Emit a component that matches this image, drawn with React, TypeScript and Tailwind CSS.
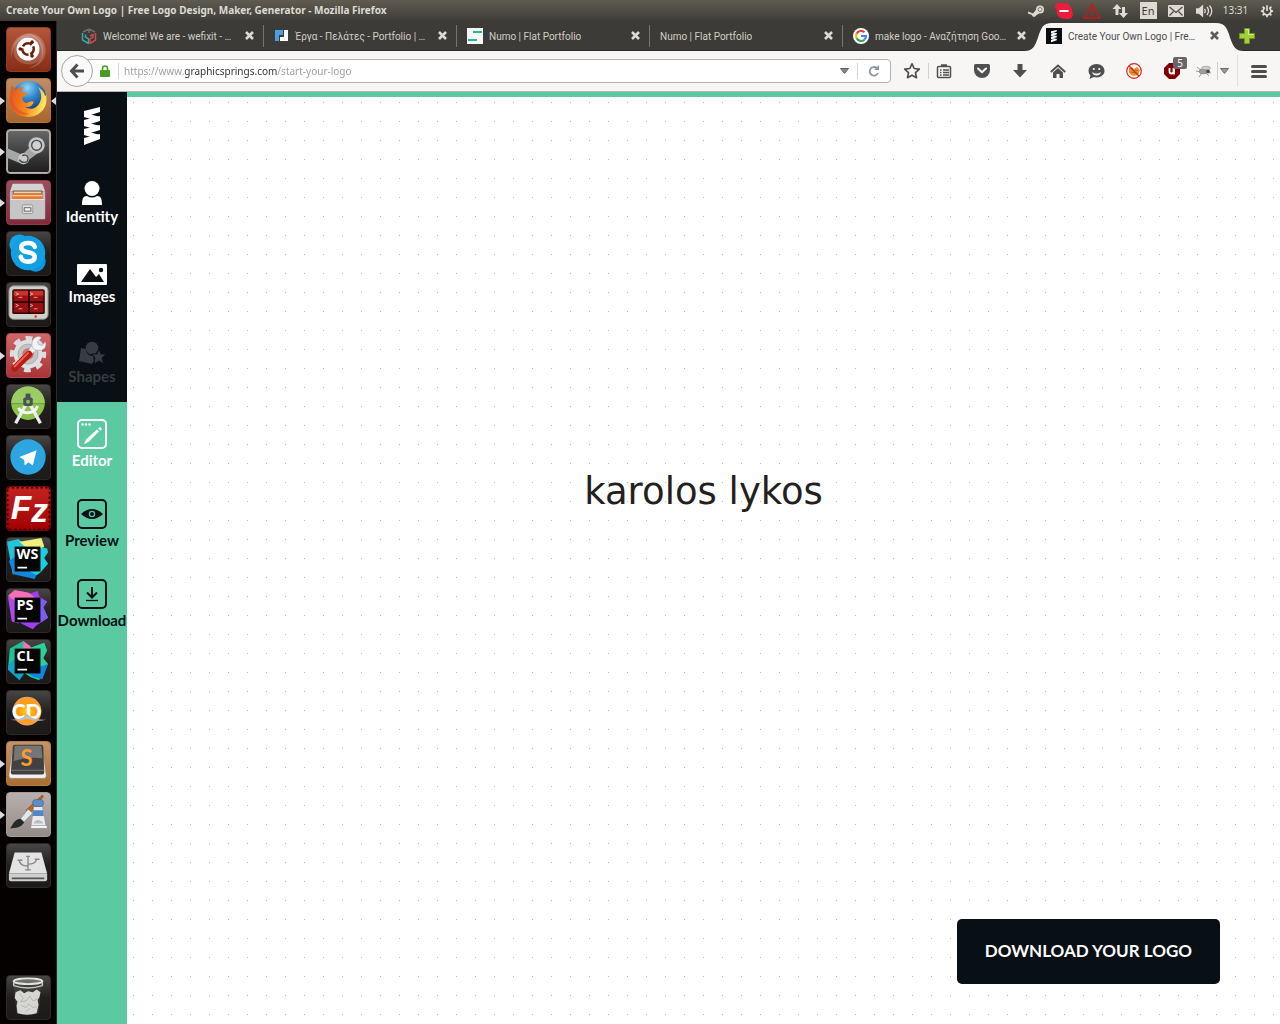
import React from "react";
import type { ReactNode } from "react";

/* ---------- launcher artwork, all on a 45x45 grid ---------- */

const UbuntuArt = () => (
  <svg viewBox="0 0 45 45" className="size-full" aria-hidden="true">
    <path d="M5 31C2 14 14 4 27 6c10 2 15 12 13 22-2 7-8 13-17 14 10-4 15-11 13-20C34 11 25 7 17 11 9 14 5 22 5 31z" fill="#fff" opacity=".22" />
    <path d="M22 6c9 0 16 8 16 17S31 39 21 38 6 31 7 22 14 7 22 6z" fill="#fff" opacity=".18" />
    <circle cx="22" cy="22" r="12" fill="#fff" />
    <circle cx="22" cy="22" r="6" fill="none" stroke="#6b1f0c" strokeWidth="2.6" strokeDasharray="10.6 2" strokeDashoffset="4" />
    <circle cx="13.8" cy="22" r="1.9" fill="#5c1a0a" />
    <circle cx="26.2" cy="14.8" r="1.9" fill="#5c1a0a" />
    <circle cx="26.2" cy="29.2" r="1.9" fill="#5c1a0a" />
  </svg>
);

const FirefoxArt = () => (
  <svg viewBox="0 0 45 45" className="size-full" aria-hidden="true">
    <defs>
      <radialGradient id="ffGlobe" cx=".45" cy=".2" r=".8">
        <stop offset="0" stopColor="#8fd6f5" />
        <stop offset=".4" stopColor="#2f86cc" />
        <stop offset="1" stopColor="#08205c" />
      </radialGradient>
      <linearGradient id="ffTail" x1="0" y1="0" x2="1" y2=".2">
        <stop offset="0" stopColor="#e4511c" />
        <stop offset=".55" stopColor="#f5871f" />
        <stop offset="1" stopColor="#ffe45c" />
      </linearGradient>
    </defs>
    <circle cx="23" cy="20" r="18" fill="url(#ffGlobe)" />
    <path d="M5 7c2 1 3 3 4 5 3-3 5-4 9-3-2 1-3 3-3 5 3 0 5 0 6 1 0 2-3 3-5 4 0 3 1 5 4 6 3 0 5-3 8-1-1 4-5 6-9 5 5 4 12 2 15-4 3-5 2-12-2-17 5 3 7 6 8 10l1-2c1 7 0 13-4 17-5 6-13 8-20 6C8 37 2 29 3 19c0-4 1-8 2-12z" fill="url(#ffTail)" />
    <path d="M5 17c0 10 7 18 18 19-9 5-20-4-20-14z" fill="#e5521d" opacity=".65" />
  </svg>
);

const SteamArt = () => (
  <svg viewBox="0 0 45 45" className="size-full" aria-hidden="true">
    <rect x="0" y="0" width="45" height="45" rx="4" fill="none" stroke="#b9b7b0" strokeWidth="2" />
    <path d="M0 19l16 7 10-10 8 7-12 9-5 4L0 29z" fill="#a4a6a8" />
    <circle cx="31" cy="16" r="8.500" fill="#c3c5c7" />
    <circle cx="31" cy="16" r="5.200" fill="#cfd1d2" stroke="#4a4a4a" strokeWidth="1.400" />
    <circle cx="17.500" cy="30" r="5.800" fill="#c9cbcc" />
    <path d="M13 31c2 4 9 4 9-1s-5-4-6-3" fill="none" stroke="#4a4a4a" strokeWidth="1.400" />
  </svg>
);

const FilesArt = () => (
  <svg viewBox="0 0 45 45" className="size-full" aria-hidden="true">
    <path d="M6 3h31l3 8H3z" fill="#d3d3d3" />
    <path d="M3 11h37v28q0 1-1 1H4q-1 0-1-1z" fill="#bfc0c0" />
    <rect x="6" y="10" width="31" height="9" fill="#6a4a3a" />
    <path d="M7 11h29v2H7z" fill="#f1d2a8" />
    <path d="M6 13h31v6H6z" fill="#e8792e" />
    <path d="M6 15h31v1H6z" fill="#fbe3cd" />
    <rect x="4" y="19" width="35" height="20" rx="1" fill="#c6c6c6" />
    <path d="M4 19h35v1H4z" fill="#eee" />
    <rect x="16" y="25" width="11" height="9" rx="1.500" fill="#e4e4e4" stroke="#858585" strokeWidth=".8" />
    <rect x="18" y="28" width="7" height="3.500" fill="#fafafa" stroke="#5a5a5a" />
  </svg>
);

const SkypeArt = () => (
  <svg viewBox="0 0 45 45" className="size-full" aria-hidden="true">
    <circle cx="13" cy="13" r="10.500" fill="#14a5e6" />
    <circle cx="30" cy="31" r="10.500" fill="#0c94dc" />
    <circle cx="22" cy="22" r="18" fill="#12a0e4" />
    <path d="M29 15.500c-1-3-4-4-7-4-4 0-7 1.500-7 4.800 0 6.700 14 3.200 14 9.700 0 3.500-3 5-7 5s-7-2-7.500-5" fill="none" stroke="#fff" strokeWidth="4.800" strokeLinecap="round" />
  </svg>
);

const TerminatorArt = () => (
  <svg viewBox="0 0 45 45" className="size-full" aria-hidden="true">
    <rect x="2" y="3" width="41" height="35" rx="5" fill="#d0d1ca" stroke="#8a8b85" />
    <rect x="5.500" y="6.500" width="34" height="26" rx="2" fill="#2c0505" />
    <path d="M7 8h15v11H7zM24 8h14v11H24zM7 21h15v10H7zM24 21h14v10H24z" fill="#98100f" />
    <path d="M7 8h15v5H7zM24 8h14v5H24z" fill="#c8322c" />
    <path d="M9 10l3 1.500L9 13M24 10l3 1.500-3 1.500M9 22l3 1.500L9 25M24 22l3 1.500-3 1.500M12 15h4M28 15h4M12 27h4M28 27h4" fill="none" stroke="#f1c9c5" strokeWidth=".8" />
    <circle cx="30" cy="35" r="1.300" fill="#e33" />
  </svg>
);

const SettingsArt = () => (
  <svg viewBox="0 0 45 45" className="size-full" aria-hidden="true">
    <circle cx="22" cy="21" r="16.500" fill="none" stroke="#dcddde" strokeWidth="5" strokeDasharray="7 5.960" strokeDashoffset="3" />
    <circle cx="22" cy="21" r="15" fill="#dfe0e1" />
    <circle cx="22" cy="21" r="10.500" fill="#c2c4c6" stroke="#abadaf" strokeWidth="1" />
    <circle cx="22" cy="21" r="6" fill="#cf7072" />
    <path d="M20 23L32 11" stroke="#f2f3f4" strokeWidth="5" />
    <path d="M28 5c3-3 6-3 8-1l-4 4 1 3 4 1 3-4c2 4-1 9-5 9-6 1-9-2-9-6 0-3 1-5 2-6z" fill="#f2f3f4" stroke="#a5a7a9" strokeWidth=".7" />
    <path d="M8 36l15-15" stroke="#b51c13" strokeWidth="7" strokeLinecap="round" />
    <path d="M8 34l14-14" stroke="#ec6355" strokeWidth="2" strokeLinecap="round" />
  </svg>
);

const AndroidStudioArt = () => (
  <svg viewBox="0 0 45 45" className="size-full" aria-hidden="true">
    <circle cx="22" cy="19" r="17.500" fill="#8bc34a" />
    <path d="M4.500 19a17.500 17.500 0 0 1 35 0z" fill="#9ccc65" />
    <path d="M4.500 19.500h35" stroke="#5d8b2d" strokeWidth=".7" />
    <path d="M20 20L9 40M24 20l11 20" stroke="#ececec" strokeWidth="3.500" />
    <path d="M12 24c3 7 17 7 20-2" fill="none" stroke="#f5f5f5" strokeWidth="3" />
    <rect x="17" y="13" width="10" height="9" rx="2" fill="#4b5257" />
    <rect x="19.500" y="9" width="5" height="5" fill="#4b5257" />
    <circle cx="22" cy="17.500" r="2" fill="#8bc34a" />
  </svg>
);

const TelegramArt = () => (
  <svg viewBox="0 0 45 45" className="size-full" aria-hidden="true">
    <circle cx="22" cy="22" r="18.500" fill="#2ca5e0" />
    <path d="M31 15L13 22l5 3 .5 6 4-3.500L27 31z" fill="#fff" />
  </svg>
);

const FileZillaArt = () => (
  <svg viewBox="0 0 45 45" className="size-full" aria-hidden="true">
    <rect x="0" y="0" width="45" height="45" fill="none" stroke="#3d0000" strokeWidth="3" strokeDasharray="2.500 2.500" />
    <text x="4" y="34" fill="#fff" fontFamily="Liberation Sans" fontWeight="700" fontStyle="italic" fontSize="35">
      F<tspan dy="3">z</tspan>
    </text>
  </svg>
);

const JetBrainsArt = ({ letters, patches }: { letters: string; patches: [string, string][] }) => (
  <svg viewBox="0 0 45 45" className="size-full" aria-hidden="true">
    {patches.map(([d, fill]) => (
      <path key={d} d={d} fill={fill} />
    ))}
    <rect x="8" y="9" width="27" height="26" fill="#050505" />
    <text x="10" y="22" fill="#fff" fontFamily="Open Sans" fontWeight="700" fontSize="15">{letters}</text>
    <path d="M11 31h10" stroke="#fff" strokeWidth="1.800" />
  </svg>
);

const CdArt = () => (
  <svg viewBox="0 0 45 45" className="size-full" aria-hidden="true">
    <defs>
      <radialGradient id="cdSun">
        <stop offset="0" stopColor="#ffd21c" />
        <stop offset=".6" stopColor="#ff9c10" />
        <stop offset="1" stopColor="#f7a04c" />
      </radialGradient>
    </defs>
    <circle cx="21" cy="21" r="15" fill="url(#cdSun)" />
    <text x="5" y="29" fill="#fff" fontFamily="Lato" fontWeight="900" fontSize="22">CD</text>
    <path d="M3 30c8 0 13-1 18-6 5 5 10 6 20 6-8 2-14 1-20-1-6 2-11 2-18 1z" fill="#b8bec5" />
  </svg>
);

const SublimeArt = () => (
  <svg viewBox="0 0 45 45" className="size-full" aria-hidden="true">
    <path d="M6 6h31l4 29q0 3-3 3H5q-3 0-3-3z" fill="#f2f2f0" stroke="#8d8780" strokeWidth=".5" />
    <path d="M8 3h28q2 0 2 2l1 27q0 2-2 2H6q-2 0-2-2L6 5q0-2 2-2z" fill="#414141" />
    <path d="M8 4h28l1 13Q22 15 7 20z" fill="#757575" />
    <path d="M4 29h35v1H4z" fill="#777" />
    <text x="14" y="25" fill="#ff9a2d" fontFamily="Lato" fontWeight="700" fontSize="23">S</text>
  </svg>
);

const PaintArt = () => (
  <svg viewBox="0 0 45 45" className="size-full" aria-hidden="true">
    <path d="M35 4l2-2 1 2-13 17-5-3z" fill="#c0641c" stroke="#7b3b0c" strokeWidth=".6" />
    <path d="M22 17l5 4-9 9-4-3z" fill="#e4e6e8" stroke="#777" strokeWidth=".6" />
    <path d="M14 27l4 4c-3 5-9 6-15 6 3-2 3-9 11-10z" fill="#26282a" />
    <path d="M28 14h9l4 21H25z" fill="#e7eaec" stroke="#8d9295" strokeWidth=".7" />
    <path d="M27.500 18h10l1 6H26.500z" fill="#4f87c4" />
    <rect x="27" y="7" width="11" height="7" rx="2.500" fill="#5f8fc6" stroke="#3b628f" strokeWidth=".7" />
    <path d="M28 32c1-5 8-5 10 0" fill="#b9bcbe" />
    <rect x="25" y="34" width="17" height="3" fill="#f4f4f4" stroke="#8a8a8a" strokeWidth=".6" />
  </svg>
);

const DriveArt = () => (
  <svg viewBox="0 0 45 45" className="size-full" aria-hidden="true">
    <path d="M8 9h28l6 22H2z" fill="#e3e3e3" />
    <path d="M2 31h40v6q0 2-2 2H4q-2 0-2-2z" fill="#cfcfcf" />
    <path d="M5 35h34v2H5z" fill="#555" />
    <path d="M22 13v14M22 23c-5 0-9-1-9-6M22 21c5 0 8-1 9-5M19 27h6M20 13h4M11 17h5M29 16h5" fill="none" stroke="#888" strokeWidth="1.400" />
  </svg>
);

const TrashArt = () => (
  <svg viewBox="0 0 45 45" className="size-full" aria-hidden="true">
    <path d="M7 8l3 31q11 4 23 0l3-31z" fill="#4a4a48" opacity=".55" />
    <path d="M9 17l5-2 4 3 4-2 5 1 4-3 4 3-1 5-2 3 1 5-2 9q-10 3-20 0l-1-8 1-4-3-4z" fill="#d6d6d2" />
    <path d="M13 19l4 4-3 4 6-1 4-5 3 5 5-2M15 31l5 2 3-4 4 4 4-1M20 37l4-3" fill="none" stroke="#b3b2ad" />
    <ellipse cx="22" cy="5.500" rx="15" ry="3" fill="#6f6f6b" stroke="#e4e4e0" strokeWidth="2" />
    <path d="M7 7v3q15 5 30 0V7" fill="none" stroke="#c5c5c0" strokeWidth="1.500" />
  </svg>
);

type LauncherItem = { name: string; art: ReactNode; tile: string; open?: boolean; focused?: boolean };

const darkTile = "bg-linear-to-b from-[#4a4847] via-[#22201f] to-[#1c1a19] border-[#2c2a29]";

const launcherItems: LauncherItem[] = [
  { name: "Search your computer", art: <UbuntuArt />, tile: "bg-linear-to-b from-[#b5583c] to-[#852c12] border-[#8d3b22]" },
  { name: "Firefox", art: <FirefoxArt />, tile: "bg-linear-to-b from-[#c08e68] to-[#a8652c] border-[#b17442]", open: true, focused: true },
  { name: "Steam", art: <SteamArt />, tile: "bg-linear-to-b from-[#6b6b6b] to-[#1b1b1b] border-[#a5a39d]", open: true },
  { name: "Files", art: <FilesArt />, tile: "bg-linear-to-b from-[#9c5060] to-[#802a3c] border-[#8b3c4b]", open: true },
  { name: "Skype", art: <SkypeArt />, tile: darkTile },
  { name: "Terminator", art: <TerminatorArt />, tile: darkTile },
  { name: "System Settings", art: <SettingsArt />, tile: "bg-linear-to-b from-[#d0686a] to-[#a83236] border-[#b54549]", open: true },
  { name: "Android Studio", art: <AndroidStudioArt />, tile: darkTile },
  { name: "Telegram", art: <TelegramArt />, tile: darkTile },
  { name: "FileZilla", art: <FileZillaArt />, tile: "bg-linear-to-b from-[#c52222] to-[#9f0000] border-[#7a0505]" },
  {
    name: "WebStorm",
    art: (
      <JetBrainsArt
        letters="WS"
        patches={[
          ["M0 4l12-3 7 6-6 30-7 1z", "#22c3dc"],
          ["M2 24l6-4 20 14 4 1-3 8-22-5z", "#1287e0"],
          ["M34 5l4 5 4 1 1 4-4 6 4 6-8 9-4 3-7-4 8-20z", "#19cfe0"],
          ["M13 4l23-4 3 9-14 6z", "#f0ee7c"],
        ]}
      />
    ),
    tile: darkTile,
  },
  {
    name: "PhpStorm",
    art: (
      <JetBrainsArt
        letters="PS"
        patches={[
          ["M1 8l8 0 8 20-5 8-7-2z", "#b347f0"],
          ["M20 6l12-4 2 6 8 5-4 6 5 11-12 8-4 4-14-7 4-6z", "#a23df2"],
          ["M34 10l8 3-4 6 5 11-9 6z", "#7b5cf5"],
          ["M1 7l7-6 15 3 6 5-20 4z", "#f56fb8"],
        ]}
      />
    ),
    tile: darkTile,
  },
  {
    name: "CLion",
    art: (
      <JetBrainsArt
        letters="CL"
        patches={[
          ["M3 9l14-8 2 10-6 26-4 1-8-7z", "#1fc296"],
          ["M2 26l6-6 10 15-5 7-12-11z", "#11a3c8"],
          ["M22 9l17-6 3 8-4 8 5 6-8 11-1 6-9-3-6-4z", "#27d39a"],
          ["M34 28l9-3-6 16-9-2-6-4z", "#0f86dd"],
          ["M17 1l7 5 2 4-9 2z", "#ec77b4"],
        ]}
      />
    ),
    tile: darkTile,
  },
  { name: "CD", art: <CdArt />, tile: darkTile },
  { name: "Sublime Text", art: <SublimeArt />, tile: "bg-linear-to-b from-[#c49468] to-[#a86d30] border-[#b27c46]", open: true },
  { name: "MyPaint", art: <PaintArt />, tile: "bg-linear-to-b from-[#b9b1ad] to-[#948b87] border-[#a49c98]", open: true },
  { name: "USB drive", art: <DriveArt />, tile: darkTile },
];

function LauncherButton({ item }: { item: LauncherItem }) {
  return (
    <li className="relative flex justify-center">
      {item.open && <span className="absolute top-1/2 left-0 size-0 -translate-y-1/2 border-y-4 border-l-[5px] border-y-transparent border-l-[#dcdcdc]" />}
      <button type="button" aria-label={item.name} className={`size-[45px] overflow-hidden rounded border bg-origin-border ${item.tile}`}>
        {item.art}
      </button>
      {item.focused && <span className="absolute top-1/2 right-0 size-0 -translate-y-1/2 border-y-4 border-r-[5px] border-y-transparent border-r-[#dcdcdc]" />}
    </li>
  );
}

function Launcher() {
  return (
    <nav aria-label="Launcher" className="flex w-[57px] shrink-0 flex-col border-r border-[#2b2a28] bg-[#060101] pt-1.5 pb-1">
      <ul className="flex flex-col gap-1.5">
        {launcherItems.map((item) => (
          <LauncherButton key={item.name} item={item} />
        ))}
      </ul>
      <ul className="mt-auto">
        <LauncherButton item={{ name: "Trash", art: <TrashArt />, tile: darkTile }} />
      </ul>
    </nav>
  );
}

/* ---------- desktop top bar ---------- */

const trayItems: { name: string; icon: ReactNode }[] = [
  {
    name: "Steam",
    icon: (
      <svg viewBox="0 0 18 16" className="h-4 w-[18px]">
        <path d="M1 8.500l5 2 4-5 4 3.500-5 3.500c-1 2-4 1.500-4-.5L1 10.500z" fill="#dfdbd2" />
        <circle cx="13" cy="6.500" r="4" fill="#dfdbd2" />
        <circle cx="13" cy="6.500" r="2" fill="none" stroke="#6a675e" strokeWidth=".8" />
      </svg>
    ),
  },
  {
    name: "Skype",
    icon: (
      <svg viewBox="0 0 18 18" className="size-[18px]">
        <path d="M0 4c1-3 4-4 6-3 7-1 11 3 11 8 2 4 0 8-3 8-2 0-3 0-5-.5-5 0-8-4-7-8.500-2-1-2-3-2-4z" fill="#ee1c3c" />
        <path d="M4.500 9h9" stroke="#fff" strokeWidth="2" />
      </svg>
    ),
  },
  {
    name: "Warning",
    icon: (
      <svg viewBox="0 0 18 16" className="h-4 w-[18px]" fill="none" stroke="#cf1419" strokeWidth="1.300">
        <path d="M9 1L1 15h16z" />
        <path d="M9 5v5M9 11.500v2" strokeWidth="1.800" />
      </svg>
    ),
  },
  {
    name: "Network",
    icon: (
      <svg viewBox="0 0 16 16" className="size-4" fill="#dfdbd2">
        <path d="M5 1L.5 6h3v6h3V6h3zM11.500 15l4.500-5h-3V4h-3v6H7z" />
      </svg>
    ),
  },
  { name: "Keyboard layout", icon: <span className="flex h-[17px] w-[17px] items-center justify-center bg-[#dfdbd2] text-[11px] leading-none text-[#3c3b37]">En</span> },
  {
    name: "Messages",
    icon: (
      <svg viewBox="0 0 16 12" className="h-3 w-4">
        <rect width="16" height="12" rx="1" fill="#dfdbd2" />
        <path d="M1.500 2L8 7.500 14.500 2M1.500 10.500l4-4M14.500 10.500l-4-4" fill="none" stroke="#4c4a44" strokeWidth="1.200" />
      </svg>
    ),
  },
  {
    name: "Volume",
    icon: (
      <svg viewBox="0 0 17 14" className="h-3.5 w-[17px]" fill="none" stroke="#dfdbd2" strokeWidth="1.300">
        <path d="M.5 5H3l3.500-3v10L3 9H.5z" fill="#dfdbd2" />
        <path d="M8.500 5q1.500 2 0 4M11 3q3 4 0 8M13.500 1.500q4.500 5.500 0 11" />
      </svg>
    ),
  },
];

function TopBar() {
  return (
    <header className="flex h-[21px] shrink-0 items-center bg-linear-to-b from-[#5f5b50] to-[#3e3d39] text-[#dfdbd2]">
      <h1 className="min-w-0 flex-1 truncate pl-1.5 text-[10px] leading-[21px] font-bold">
        Create Your Own Logo | Free Logo Design, Maker, Generator - Mozilla Firefox
      </h1>
      {trayItems.map((item) => (
        <button key={item.name} type="button" aria-label={item.name} className="flex h-full w-7 items-center justify-center">
          {item.icon}
        </button>
      ))}
      <time className="w-[35px] text-center text-[10px]">13:31</time>
      <button type="button" aria-label="Session" className="flex w-[27px] justify-center">
        <svg viewBox="0 0 16 16" className="size-3.5" fill="none" stroke="#dfdbd2">
          <path d="M5.500 4.300a4.500 4.500 0 1 0 5 0M8 1.500V8" strokeWidth="1.900" />
          <path d="M1 8h2.500M12.500 8H15M3 3l1.600 1.600M13 3l-1.600 1.600M3 13l1.600-1.600M13 13l-1.600-1.600M8 12.500V15" strokeWidth="2" />
        </svg>
      </button>
    </header>
  );
}

/* ---------- browser tabs ---------- */

const SpringShape = () => (
  <g fill="#fff">
    <path d="M0 4L16 0v5L0 10zM0 13l16-4v5L0 19zM0 22l16-4v5L0 28zM0 31l16-4v5L0 38z" />
    <path d="M0 8l5-1 11 3-6 3-10-3zM0 17l5-1 11 3-6 3-10-3zM0 26l5-1 11 3-6 3-10-3z" />
  </g>
);

const WefixitIcon = () => (
  <svg viewBox="0 0 16 16" className="size-4 shrink-0" fill="none" strokeWidth="1.500">
    <path d="M2 4l6-3 6 3M8 1v4" stroke="#6d6d6d" />
    <path d="M1.500 5v7l6 3.500V11l-3-2V6.500" stroke="#38a9a6" />
    <path d="M14.500 5v7L9 15.500V11l3-2V6.500L9 8" stroke="#c94b4f" />
  </svg>
);

const PortfolioIcon = () => (
  <svg viewBox="0 0 14 12" className="ml-px h-3 w-3.5 shrink-0">
    <path d="M0 0h8v5H4v6H0z" fill="#4aa0dc" />
    <path d="M9 0h4v11H5V7h4z" fill="#fff" />
  </svg>
);

const NumoIcon = () => (
  <svg viewBox="0 0 16 16" className="size-4 shrink-0">
    <path d="M0 0h16v16H0z" fill="#f6f6f6" />
    <path d="M6 4h9M1 12h9" stroke="#1fb89b" strokeWidth="1.800" />
  </svg>
);

const GoogleIcon = () => (
  <svg viewBox="0 0 16 16" className="size-4 shrink-0">
    <circle cx="8" cy="8" r="8" fill="#fff" />
    <g fill="none" strokeWidth="2.200">
      <path d="M11.500 4.300A5 5 0 0 0 3.600 5.700" stroke="#ea4335" />
      <path d="M3.600 5.700a5 5 0 0 0 0 4.600" stroke="#fbbc05" />
      <path d="M3.600 10.300a5 5 0 0 0 7.800 1.400" stroke="#34a853" />
      <path d="M11.400 11.700A5 5 0 0 0 13 8H8" stroke="#4285f4" />
    </g>
  </svg>
);

const SpringIcon = () => (
  <svg viewBox="0 0 16 16" className="size-4 shrink-0">
    <path d="M0 0h16v16H0z" fill="#070f14" />
    <g transform="translate(5 2) scale(.36 .32)">
      <SpringShape />
    </g>
  </svg>
);

const tabs: { title: string; icon?: ReactNode; active?: boolean }[] = [
  { title: "Welcome! We are - wefixit - …", icon: <WefixitIcon /> },
  { title: "Έργα - Πελάτες - Portfolio | …", icon: <PortfolioIcon /> },
  { title: "Numo | Flat Portfolio", icon: <NumoIcon /> },
  { title: "Numo | Flat Portfolio" },
  { title: "make logo - Αναζήτηση Goo…", icon: <GoogleIcon /> },
  { title: "Create Your Own Logo | Fre…", icon: <SpringIcon />, active: true },
];

function TabStrip() {
  return (
    <div className="flex h-[30px] shrink-0 border-b border-[#2a2926] bg-[#3c3b37] pl-[14px] font-[Roboto,sans-serif]">
      <div role="tablist" aria-label="Browser tabs" className="flex min-w-0">
        {tabs.map((tab, i) => (
          <div key={i} className="relative flex w-[193px] min-w-0 items-center">
            {tab.active && (
              <svg viewBox="0 0 220 29" preserveAspectRatio="none" className="absolute -left-3 top-0.5 h-7 w-[220px]" aria-hidden="true">
                <path d="M0 29c9 0 11-5 14-14C17 5 19 0 28 0h164c9 0 11 5 14 15 3 9 5 14 14 14z" fill="#f7f6f5" />
              </svg>
            )}
            <button type="button" role="tab" aria-selected={!!tab.active} className={`relative flex min-w-0 flex-1 items-center gap-1.5 pl-2.5 text-left text-[10px] leading-4 ${tab.active ? "text-[#4c4c4c]" : "text-[#d3cfc5]"}`}>
              {tab.icon}
              <span className="overflow-hidden pt-0.5 whitespace-nowrap">{tab.title}</span>
            </button>
            <button type="button" aria-label={`Close ${tab.title}`} className={`relative mr-2 flex w-3 shrink-0 justify-center ${tab.active ? "text-[#5c5c5c]" : "text-[#dcdad5]"}`}>
              <svg viewBox="0 0 9 9" className="size-[9px]" stroke="currentColor" strokeWidth="2.600">
                <path d="M1 1l7 7M8 1L1 8" />
              </svg>
            </button>
            <span className={`h-[22px] w-px ${i < 4 ? "bg-[#75736e]" : "bg-transparent"}`} />
          </div>
        ))}
      </div>
      <button type="button" aria-label="Open a new tab" className="relative ml-2.5 flex items-center">
        <svg viewBox="0 0 16 16" className="size-4">
          <path d="M5.500.5h5v5h5v5h-5v5h-5v-5h-5v-5h5z" fill="#a4cf3b" stroke="#6f9c1c" />
          <path d="M6.500 1.500h3v5h5" fill="none" stroke="#d3ec8c" />
        </svg>
      </button>
    </div>
  );
}

/* ---------- browser toolbar ---------- */

const toolButton = "flex h-full w-[38px] shrink-0 items-center justify-center text-[#4f4f4f]";

function Toolbar() {
  return (
    <div className="flex h-[41px] shrink-0 items-center border-b border-[#b6b6b3] bg-[#f7f6f5] pl-1">
      <button type="button" aria-label="Back" className="relative z-10 flex size-8 shrink-0 items-center justify-center rounded-full border border-[#a9a8a4] bg-[#fafafa]">
        <svg viewBox="0 0 16 16" className="size-4" fill="none" stroke="#4d4d4d" strokeWidth="3">
          <path d="M8.500 1.500L2.500 8l6 6.500M3 8h12" />
        </svg>
      </button>
      <div className="-ml-2 flex h-6 min-w-0 flex-1 items-center rounded-r-sm border border-[#b1b0ac] bg-white pl-3.5">
        <svg viewBox="0 0 10 12" className="h-3 w-2.5 shrink-0">
          <path d="M2.500 6V3.500a2.500 2.500 0 0 1 5 0V6" fill="none" stroke="#4a9a23" strokeWidth="1.600" />
          <rect y="5" width="10" height="7" rx="1" fill="#4a9a23" />
        </svg>
        <span className="ml-2 h-4 w-px shrink-0 bg-[#d4d4d4]" />
        <input
          type="text"
          aria-label="Address"
          defaultValue="https://www.graphicsprings.com/start-your-logo"
          className="ml-[5px] h-full min-w-0 flex-1 bg-[linear-gradient(90deg,#9a9a9a_60px,#2e2e2e_60px,#2e2e2e_153px,#9a9a9a_153px)] bg-clip-text text-[10px] text-transparent outline-none"
        />
        <button type="button" aria-label="Show history" className="flex w-[25px] justify-center">
          <svg viewBox="0 0 9 6" className="h-1.5 w-[9px]">
            <path d="M.5.5h8l-4 5z" fill="#888" stroke="#5e5e5e" />
          </svg>
        </button>
        <span className="h-4 w-px bg-[#d4d4d4]" />
        <button type="button" aria-label="Reload" className="flex w-8 justify-center">
          <svg viewBox="0 0 12 12" className="size-3" fill="none" stroke="#8a98a5" strokeWidth="1.800">
            <path d="M9 3.200A4.300 4.300 0 1 0 10 8" />
            <path d="M11 0v5H6z" fill="#8a98a5" stroke="none" />
          </svg>
        </button>
      </div>
      <button type="button" aria-label="Bookmark this page" className="ml-1 flex h-full w-[33px] shrink-0 items-center justify-center">
        <svg viewBox="0 0 18 18" className="size-[18px]" fill="none" stroke="#4f4f4f" strokeWidth="1.700" strokeLinejoin="round">
          <path d="M9 1.800l2.200 4.700 5.100.6-3.800 3.500 1 5.100L9 13.200l-4.500 2.500 1-5.100L1.700 7.100l5.100-.6z" />
        </svg>
      </button>
      <span className="h-4 w-px bg-[#d0d0ce]" />
      <button type="button" aria-label="Show bookmarks" className="flex h-full w-[34px] shrink-0 items-center justify-center pr-1">
        <svg viewBox="0 0 16 16" className="size-4" fill="none" stroke="#4f4f4f" strokeWidth="1.500">
          <rect x="1.500" y="3.500" width="13" height="11" rx="1" />
          <path d="M4 7h1.500M7 7h6M4 9.500h1.500M7 9.500h6M4 12h1.500M7 12h6" strokeWidth="1.300" />
          <path d="M5 2.500h6" strokeWidth="2.500" />
        </svg>
      </button>
      <button type="button" aria-label="Save to Pocket" className={toolButton}>
        <svg viewBox="0 0 16 14" className="h-3.5 w-4">
          <path d="M1.500 0h13Q16 0 16 1.500V6a8 8 0 0 1-16 0V1.500Q0 0 1.500 0z" fill="currentColor" />
          <path d="M4 4.500L8 8.300l4-3.800" fill="none" stroke="#f7f6f5" strokeWidth="2" strokeLinecap="round" strokeLinejoin="round" />
        </svg>
      </button>
      <button type="button" aria-label="Downloads" className={toolButton}>
        <svg viewBox="0 0 14 14" className="size-3.5" fill="currentColor">
          <path d="M4.500 0h5v6H14l-7 7.500L0 6h4.500z" />
        </svg>
      </button>
      <button type="button" aria-label="Home" className={toolButton}>
        <svg viewBox="0 0 16 14" className="h-3.5 w-4">
          <path d="M.8 8L8 1.500 15.200 8" fill="none" stroke="currentColor" strokeWidth="1.900" />
          <path d="M3 8.500l5-4.500 5 4.500V14H9.500v-4h-3v4H3z" fill="currentColor" />
        </svg>
      </button>
      <button type="button" aria-label="Chat" className={toolButton}>
        <svg viewBox="0 0 17 15" className="h-[15px] w-[17px]">
          <path d="M8.500 0c4.700 0 8 3 8 6.800s-3.300 6.700-8 6.700c-1 0-2-.1-2.800-.4L1.500 15l1-3.500C1.200 10.300.5 8.700.5 6.800.5 3 3.800 0 8.500 0z" fill="currentColor" />
          <circle cx="5.800" cy="5" r="1.100" fill="#f7f6f5" />
          <circle cx="11.200" cy="5" r="1.100" fill="#f7f6f5" />
          <path d="M4 8q4.500 3 9 0-1 3.500-4.500 3.500T4 8z" fill="#f7f6f5" />
        </svg>
      </button>
      <button type="button" aria-label="Firebug blocked" className={toolButton}>
        <svg viewBox="0 0 16 16" className="size-4">
          <path d="M3 5l3-1 2 2 3-2 3 3-2 5-5 1-4-3z" fill="#e3922a" />
          <path d="M5 9l5 1M9 7l3 1" stroke="#b56a15" />
          <circle cx="8" cy="8" r="7.300" fill="none" stroke="#d8231f" strokeWidth="1.200" />
          <path d="M3 3l10 10" stroke="#d8231f" strokeWidth="1.200" />
        </svg>
      </button>
      <button type="button" aria-label="uBlock Origin, 5 blocked" className={`${toolButton} relative`}>
        <svg viewBox="0 0 16 16" className="size-4">
          <path d="M5 0h6l5 5v6l-5 5H5l-5-5V5z" fill="#800000" />
          <path d="M5.500 5v3.500q0 2 2 2t2-2V5M10 5v6.500" fill="none" stroke="#fff" strokeWidth="1.800" />
        </svg>
        <span className="absolute top-1.5 right-1 flex h-3 w-3.5 items-center justify-center rounded-xs bg-[#666] text-[10px] leading-3 text-white">5</span>
      </button>
      <button type="button" aria-label="Firebug" className="flex w-[26px] shrink-0 items-center justify-center">
        <svg viewBox="0 0 16 14" className="h-3.5 w-4" stroke="#777">
          <path d="M6 7L1 3M6 8L0 7M6 9l-3 4M10 9l3 3M11 8l4 1" strokeWidth=".7" />
          <ellipse cx="7" cy="7.500" rx="4" ry="2.400" fill="#9c9c9c" strokeWidth=".5" />
          <ellipse cx="10" cy="4" rx="4.500" ry="1.800" fill="#d0d0d0" strokeWidth=".5" />
          <circle cx="12" cy="7.500" r="1.800" fill="#444" strokeWidth=".5" />
        </svg>
      </button>
      <span className="h-[18px] w-px bg-[#cfcfcc]" />
      <button type="button" aria-label="More add-ons" className="flex w-[13px] justify-center">
        <svg viewBox="0 0 9 6" className="h-1.5 w-[9px]">
          <path d="M.5.500h8l-4 5z" fill="#999" stroke="#6a6a6a" />
        </svg>
      </button>
      <span className="ml-1.5 h-8 w-px bg-[#deddda]" />
      <button type="button" aria-label="Open menu" className="flex h-full w-[42px] items-center justify-center">
        <svg viewBox="0 0 16 13" className="h-[13px] w-4" stroke="#4d4d4d" strokeWidth="3" strokeLinecap="round">
          <path d="M1.500 1.500h13M1.500 6.500h13M1.500 11.500h13" />
        </svg>
      </button>
    </div>
  );
}

/* ---------- logo maker page ---------- */

function SideItem({ label, tone, icon }: { label: string; tone: string; icon: ReactNode }) {
  return (
    <button type="button" className={`flex w-full flex-col items-center pt-[17px] pb-[11px] ${tone}`}>
      <span className="flex h-[30px] items-end">{icon}</span>
      <span className="text-[15px] leading-[22px] font-bold">{label}</span>
    </button>
  );
}

const frame = "flex size-[30px] items-center justify-center rounded-[5px] border-2 border-current";

function Sidebar() {
  return (
    <aside className="flex w-[70px] shrink-0 flex-col bg-[#5bcaa3] font-[Lato,sans-serif]">
      <div className="bg-[#080f15] pb-1">
        <a href="#home" aria-label="Graphic Springs" className="flex h-[66px] justify-center pt-[15px]">
          <svg viewBox="0 0 16 38" className="h-[38px] w-4">
            <SpringShape />
          </svg>
        </a>
        <SideItem
          label="Identity"
          tone="text-white"
          icon={
            <svg viewBox="0 0 20 24" className="h-6 w-5" fill="currentColor">
              <ellipse cx="10" cy="7.500" rx="7.500" ry="7.500" />
              <path d="M0 24c0-6 1-9 5-9q5 3 10 0c4 0 5 3 5 9z" />
            </svg>
          }
        />
        <SideItem
          label="Images"
          tone="text-white"
          icon={
            <svg viewBox="0 0 30 21" className="h-[21px] w-[30px]">
              <rect width="30" height="21" rx="1" fill="currentColor" />
              <path d="M4 18l9-13 6 8 3-3 5 8z" fill="#080f15" />
              <circle cx="24" cy="6" r="2.200" fill="#080f15" />
            </svg>
          }
        />
        <SideItem
          label="Shapes"
          tone="text-[#363c40]"
          icon={
            <svg viewBox="0 0 28 24" className="h-6 w-7" fill="currentColor">
              <circle cx="14" cy="7" r="6.300" />
              <path d="M3 7l5 1c0 4 3 7 7 7l1 5-2 3L1 20z" />
              <path d="M21 8l2 5 5 0-4 4 2 6-5-3-5 3 1-6-3-4 5 0z" stroke="#080f15" strokeWidth=".8" />
            </svg>
          }
        />
      </div>
      <SideItem
        label="Editor"
        tone="text-white"
        icon={
          <span className={frame}>
            <svg viewBox="0 0 26 26" className="size-[26px]" fill="currentColor">
              <circle cx="3.500" cy="3.500" r="1.200" />
              <circle cx="7" cy="3.500" r="1.200" />
              <circle cx="10.500" cy="3.500" r="1.200" />
              <path d="M5 23l2-4.500L18 8.500l2 2L9.500 21zM19 7.500L21 6l2 2-1.500 1.700z" />
            </svg>
          </span>
        }
      />
      <SideItem
        label="Preview"
        tone="text-[#080f15]"
        icon={
          <span className={frame}>
            <svg viewBox="0 0 26 26" className="size-[26px]">
              <path d="M2 13q11-10 22 0-11 10-22 0z" fill="currentColor" />
              <circle cx="13" cy="13" r="2.600" fill="none" stroke="#5bcaa3" strokeWidth="1.200" />
            </svg>
          </span>
        }
      />
      <SideItem
        label="Download"
        tone="text-[#080f15]"
        icon={
          <span className={frame}>
            <svg viewBox="0 0 26 26" className="size-[26px]" fill="none" stroke="currentColor" strokeWidth="2">
              <path d="M13 6v10M8 11.500l5 5 5-5" />
              <path d="M7 19.500h12" strokeWidth="1.300" />
            </svg>
          </span>
        }
      />
    </aside>
  );
}

function Canvas() {
  return (
    <main className="flex min-w-0 flex-1 flex-col border-t-[5px] border-[#5bcaa3] [background:conic-gradient(from_270deg_at_1px_1px,#b8b8b8_90deg,transparent_0)_6px_5px/19px_19px_#fff]">
      <p className="mt-[367px] text-center font-['DejaVu_Sans',sans-serif] text-[37px] leading-[56px] text-[#231f20]">karolos lykos</p>
      <button type="button" className="mt-auto mr-[60px] mb-10 h-[65px] self-end rounded-[5px] bg-[#080f15] px-7 pb-px font-[Lato,sans-serif] text-[17px] font-bold whitespace-nowrap text-white">
        DOWNLOAD YOUR LOGO
      </button>
    </main>
  );
}

export default function App() {
  return (
    <div className="flex min-h-screen flex-col bg-[#3c3b37] font-['Noto_Sans',sans-serif]">
      <TopBar />
      <div className="flex flex-1">
        <Launcher />
        <div className="flex min-w-0 flex-1 flex-col">
          <TabStrip />
          <Toolbar />
          <div className="flex flex-1">
            <Sidebar />
            <Canvas />
          </div>
        </div>
      </div>
    </div>
  );
}
